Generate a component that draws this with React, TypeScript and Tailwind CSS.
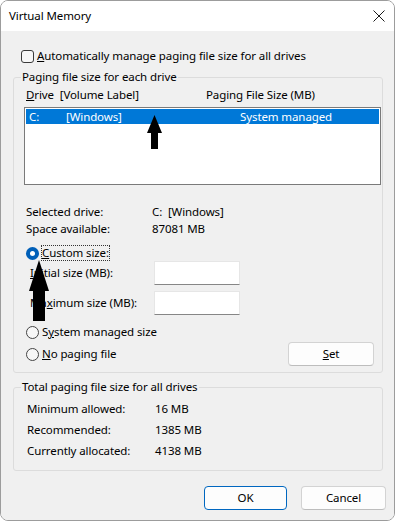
import React from 'react'

function Radio({ checked }: { checked?: boolean }) {
  if (checked) {
    return (
      <span className="w-[13px] h-[13px] rounded-full bg-[#005fb8] flex items-center justify-center shrink-0">
        <span className="w-[5px] h-[5px] rounded-full bg-white" />
      </span>
    )
  }
  return <span className="w-[13px] h-[13px] rounded-full border border-[#444] bg-[#f7f7f7] shrink-0" />
}

function Btn({ children, primary, w }: { children: React.ReactNode; primary?: boolean; w: string }) {
  return (
    <button
      className={
        'h-[24px] rounded-[4px] bg-[#fdfdfd] text-[11.5px] leading-[16px] text-black flex items-center justify-center ' +
        w +
        (primary ? ' border border-[#0067c0]' : ' border border-[#d3d3d3] border-b-[#bdbdbd]')
      }
    >
      {children}
    </button>
  )
}

export default function App() {
  return (
    <div className="w-[396px] h-[523px] bg-white relative overflow-hidden font-['Noto_Sans',sans-serif] text-[11.5px] tracking-[-0.1px] leading-[16px] text-black">
      <div className="w-[395px] h-[521px] border border-[#9c9c9c] rounded-[8px] flex flex-col overflow-hidden">
        {/* title bar */}
        <div className="h-[30px] bg-white flex items-center justify-between pl-[8px] pr-[8px] shrink-0">
          <span>Virtual Memory</span>
          <svg width="12" height="12" viewBox="0 0 12 12" className="mr-[1px]">
            <path d="M0.5 0.5 L11.5 11.5 M11.5 0.5 L0.5 11.5" stroke="#1a1a1a" strokeWidth="1" />
          </svg>
        </div>

        {/* body */}
        <div className="flex-1 bg-[#f0f0f0] flex flex-col">
          <div className="flex items-center gap-[3px] ml-[20px] mt-[17px] h-[16px]">
            <span className="w-[13px] h-[13px] rounded-[3px] border border-[#3a3a3a] bg-[#f7f7f7]" />
            <span>
              <span className="underline">A</span>utomatically manage paging file size for all drives
            </span>
          </div>

          <fieldset className="ml-[12px] mt-[6px] w-[370px] border border-[#dcdcdc] rounded-[3px] pl-[10px] pb-[6px]">
            <legend className="-ml-[3px] px-[1px] leading-[14px]">Paging file size for each drive</legend>
            <div className="flex pl-[2px] mt-[3px]">
              <span className="w-[180px]">
                <span className="underline">D</span>rive&nbsp; [Volume Label]
              </span>
              <span>Paging File Size (MB)</span>
            </div>
            <div className="mt-[4px] w-[357px] h-[78px] border border-[#7a7a7a] bg-white p-[1px]">
              <div className="h-[15px] bg-[#0078d7] text-white flex items-center pl-[3px]">
                <span className="w-[37px]">C:</span>
                <span className="w-[174px]">[Windows]</span>
                <span>System managed</span>
              </div>
            </div>

            <div className="mt-[18px] pl-[2px]">
              <div className="flex h-[17px] items-center">
                <span className="w-[126px]">Selected drive:</span>
                <span>C:&nbsp; [Windows]</span>
              </div>
              <div className="flex h-[17px] items-center">
                <span className="w-[126px]">Space available:</span>
                <span>87081 MB</span>
              </div>
            </div>

            <div className="mt-[8px] pl-[2px] flex items-center h-[16px] gap-[2px]">
              <Radio checked />
              <span className="border border-dotted border-[#333] leading-[14px]">
                <span className="underline">C</span>ustom size:
              </span>
            </div>
            <div className="flex items-center pl-[6px] h-[24px]">
              <span className="w-[124px]">
                <span className="underline">I</span>nitial size (MB):
              </span>
              <span className="w-[86px] h-[24px] bg-white border border-[#e6e6e6] border-b-[#868686]" />
            </div>
            <div className="flex items-center pl-[6px] h-[24px] mt-[6px]">
              <span className="w-[124px]">
                Ma<span className="underline">x</span>imum size (MB):
              </span>
              <span className="w-[86px] h-[24px] bg-white border border-[#e6e6e6] border-b-[#868686]" />
            </div>
            <div className="mt-[9px] pl-[2px] flex items-center h-[16px] gap-[3px]">
              <Radio />
              <span>
                S<span className="underline">y</span>stem managed size
              </span>
            </div>
            <div className="mt-[2px] pl-[2px] flex items-center h-[24px]">
              <div className="flex items-center gap-[3px] flex-1">
                <Radio />
                <span>
                  <span className="underline">N</span>o paging file
                </span>
              </div>
              <div className="mr-[8px]">
                <Btn w="w-[86px]">
                  <span className="underline">S</span>et
                </Btn>
              </div>
            </div>
          </fieldset>

          <fieldset className="ml-[12px] mt-[7px] w-[370px] border border-[#dcdcdc] rounded-[3px] pl-[13px] pb-[9px]">
            <legend className="-ml-[6px] px-[1px] leading-[14px]">Total paging file size for all drives</legend>
            <div className="mt-[4px]">
              <div className="flex h-[21px] items-center">
                <span className="w-[128px]">Minimum allowed:</span>
                <span>16 MB</span>
              </div>
              <div className="flex h-[21px] items-center">
                <span className="w-[128px]">Recommended:</span>
                <span>1385 MB</span>
              </div>
              <div className="flex h-[21px] items-center">
                <span className="w-[128px]">Currently allocated:</span>
                <span>4138 MB</span>
              </div>
            </div>
          </fieldset>

          <div className="flex justify-end gap-[14px] pr-[8px] mt-[15px]">
            <Btn primary w="w-[83px]">OK</Btn>
            <Btn w="w-[85px]">Cancel</Btn>
          </div>
        </div>
      </div>

      {/* annotation arrows drawn over the screenshot */}
      <svg className="absolute left-[146px] top-[115px]" width="17" height="35" viewBox="0 0 17 35">
        <path d="M8.5 0 L16 18 L12 18 L12 34 L5 34 L5 18 L1 18 Z" fill="#000" />
      </svg>
      <svg className="absolute left-[28px] top-[260px]" width="22" height="62" viewBox="0 0 22 62">
        <path d="M11 0 L21 31 L17 31 L17 61 L5 61 L5 31 L1 31 Z" fill="#000" />
      </svg>
    </div>
  )
}
